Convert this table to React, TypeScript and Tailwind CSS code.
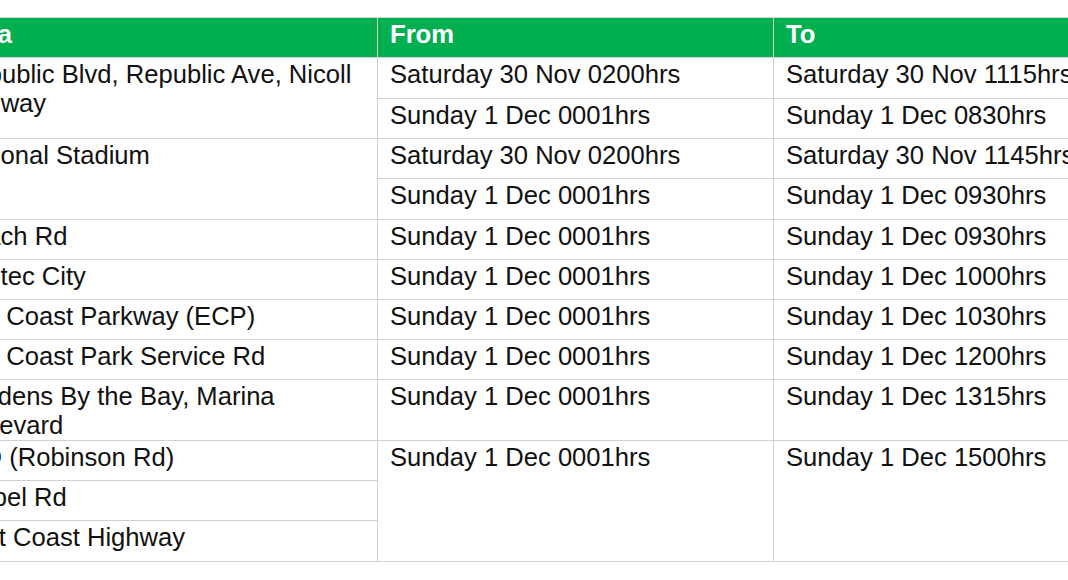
import React from "react";

const cell = "bg-white pl-3 pr-3 pt-[2px] text-[#111] whitespace-normal";
const head = "bg-[#00b050] pl-3 pr-3 pt-[2px] text-white font-bold";

export default function App() {
  return (
    <div
      className="w-[1068px] h-[580px] overflow-hidden bg-white"
      style={{ fontFamily: '"Liberation Sans", Arial, sans-serif' }}
    >
      <div className="pt-[17px]">
        <div className="-ml-[64px] grid w-max grid-cols-[441px_395px_420px] grid-rows-[39px_40px_39px_39px_40px_39px_39px_39px_39px_60px_39px_39px_40px] gap-px border-y border-[#d0d0d0] bg-[#d0d0d0] text-[25.6px] leading-[29px]">
          <div className={`${head} indent-[7px]`}>Area</div>
          <div className={head}>From</div>
          <div className={head}>To</div>

          <div className={`${cell} row-span-2 indent-[7px]`}>
            Republic Blvd, Republic Ave, Nicoll Highway
          </div>
          <div className={cell}>Saturday 30 Nov 0200hrs</div>
          <div className={cell}>Saturday 30 Nov 1115hrs</div>
          <div className={cell}>Sunday 1 Dec 0001hrs</div>
          <div className={cell}>Sunday 1 Dec 0830hrs</div>

          <div className={`${cell} row-span-2 indent-[7px]`}>National Stadium</div>
          <div className={cell}>Saturday 30 Nov 0200hrs</div>
          <div className={cell}>Saturday 30 Nov 1145hrs</div>
          <div className={cell}>Sunday 1 Dec 0001hrs</div>
          <div className={cell}>Sunday 1 Dec 0930hrs</div>

          <div className={`${cell} indent-[7px]`}>Beach Rd</div>
          <div className={cell}>Sunday 1 Dec 0001hrs</div>
          <div className={cell}>Sunday 1 Dec 0930hrs</div>

          <div className={`${cell} indent-[7px]`}>Suntec City</div>
          <div className={cell}>Sunday 1 Dec 0001hrs</div>
          <div className={cell}>Sunday 1 Dec 1000hrs</div>

          <div className={cell}>East Coast Parkway (ECP)</div>
          <div className={cell}>Sunday 1 Dec 0001hrs</div>
          <div className={cell}>Sunday 1 Dec 1030hrs</div>

          <div className={cell}>East Coast Park Service Rd</div>
          <div className={cell}>Sunday 1 Dec 0001hrs</div>
          <div className={cell}>Sunday 1 Dec 1200hrs</div>

          <div className={`${cell} indent-[7px]`}>
            Gardens By the Bay, Marina Boulevard
          </div>
          <div className={cell}>Sunday 1 Dec 0001hrs</div>
          <div className={cell}>Sunday 1 Dec 1315hrs</div>

          <div className={cell}>CBD (Robinson Rd)</div>
          <div className={`${cell} row-span-3`}>Sunday 1 Dec 0001hrs</div>
          <div className={`${cell} row-span-3`}>Sunday 1 Dec 1500hrs</div>

          <div className={`${cell} indent-[12px]`}>Nobel Rd</div>

          <div className={cell}>West Coast Highway</div>
        </div>
      </div>
    </div>
  );
}
